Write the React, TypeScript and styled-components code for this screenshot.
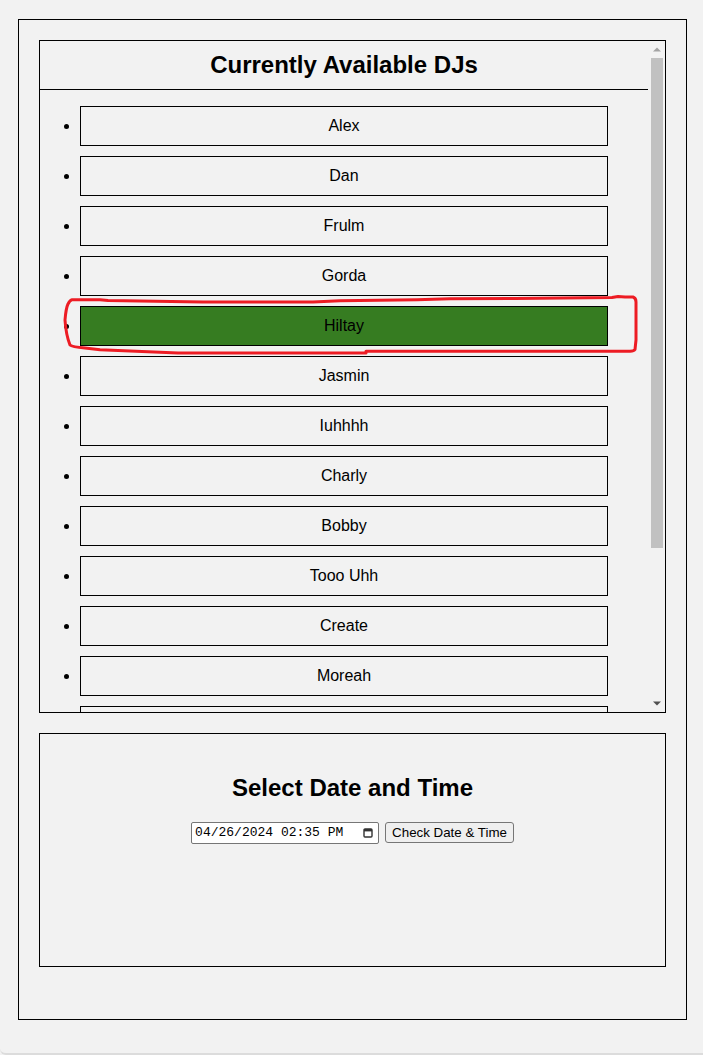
import React, { useState } from 'react';
import styled, { createGlobalStyle } from 'styled-components';

const djs = [
  'Alex',
  'Dan',
  'Frulm',
  'Gorda',
  'Hiltay',
  'Jasmin',
  'Iuhhhh',
  'Charly',
  'Bobby',
  'Tooo Uhh',
  'Create',
  'Moreah',
  'Zed',
  'Kiko',
  'Lumo',
  'Nova',
];

const GlobalStyle = createGlobalStyle`
  html, body {
    margin: 0;
    padding: 0;
    background: #f2f2f2;
  }
  body {
    font-family: "Liberation Sans", Arial, sans-serif;
    color: #000;
  }
`;

const Page = styled.div`
  position: relative;
  box-sizing: border-box;
  height: 1055px;
  padding: 19px 16px 0 18px;
  border-bottom: 2px solid #dcdcdc;
  border-bottom-left-radius: 6px;
  overflow: hidden;
`;

const Frame = styled.div`
  box-sizing: border-box;
  height: 1001px;
  border: 1px solid #000;
  padding: 20px;
  display: flex;
  flex-direction: column;
  gap: 20px;
`;

const DJPanel = styled.div`
  box-sizing: border-box;
  height: 673px;
  border: 1px solid #000;
  display: flex;
`;

const ScrollArea = styled.div`
  flex: 1;
  min-width: 0;
  overflow-y: auto;
  scrollbar-width: none;

  &::-webkit-scrollbar {
    display: none;
  }
`;

const Scrollbar = styled.div`
  width: 17px;
  flex-shrink: 0;
  display: flex;
  flex-direction: column;
`;

const ScrollArrow = styled.div`
  height: 17px;
  display: flex;
  align-items: center;
  justify-content: center;
`;

const ScrollTrack = styled.div`
  flex: 1;
`;

const ScrollThumb = styled.div`
  height: 490px;
  margin: 0 2px 0 3px;
  background: #c1c1c1;
`;

const PanelHeader = styled.div`
  border-bottom: 1px solid #000;

  h2 {
    margin: 10px 0;
    font-size: 24px;
    font-weight: bold;
    text-align: center;
  }
`;

const DJList = styled.ul`
  margin: 16px 0;
  padding: 0 40px;
  list-style: disc;

  li {
    margin-bottom: 10px;
    font-size: 16px;
  }
`;

const DJButton = styled.button<{ $selected: boolean }>`
  box-sizing: border-box;
  display: inline-block;
  width: 100%;
  height: 40px;
  margin: 0;
  border: 1px solid #000;
  border-radius: 0;
  background: ${(p) => (p.$selected ? '#367c21' : 'transparent')};
  color: #000;
  font-family: "Liberation Sans", Arial, sans-serif;
  font-size: 16px;
  cursor: pointer;
`;

const DatePanel = styled.div`
  box-sizing: border-box;
  height: 234px;
  border: 1px solid #000;
  padding: 20px;
  text-align: center;

  h2 {
    margin: 0.83em 0;
    font-size: 24px;
    font-weight: bold;
  }
`;

const DateRow = styled.div`
  display: flex;
  justify-content: center;
  align-items: center;
  gap: 6px;
`;

const DateField = styled.label`
  box-sizing: border-box;
  width: 188px;
  height: 22px;
  display: flex;
  align-items: center;
  padding: 0 5px 0 3px;
  border: 1px solid #767676;
  border-radius: 2px;
  background: #fff;

  input {
    flex: 1;
    min-width: 0;
    border: none;
    outline: none;
    padding: 0;
    background: transparent;
    font-family: "Liberation Mono", "DejaVu Sans Mono", monospace;
    font-size: 13px;
    color: #000;
  }
`;

const CheckButton = styled.button`
  box-sizing: border-box;
  height: 21px;
  font-family: "Liberation Sans", Arial, sans-serif;
  font-size: 13.33px;
  padding: 1px 6px;
  border: 1px solid #767676;
  border-radius: 3px;
  background: #efefef;
  color: #000;
`;

const Annotation = styled.svg`
  position: absolute;
  top: 0;
  left: 0;
  pointer-events: none;
`;

const App: React.FC = () => {
  const [selected, setSelected] = useState('Hiltay');
  const [when, setWhen] = useState('04/26/2024 02:35 PM');

  return (
    <Page>
      <GlobalStyle />
      <Frame>
        <DJPanel>
          <ScrollArea>
            <PanelHeader>
              <h2>Currently Available DJs</h2>
            </PanelHeader>
            <DJList>
              {djs.map((name) => (
                <li key={name}>
                  <DJButton $selected={name === selected} onClick={() => setSelected(name)}>
                    {name}
                  </DJButton>
                </li>
              ))}
            </DJList>
          </ScrollArea>
          <Scrollbar>
            <ScrollArrow>
              <svg width="8" height="5" viewBox="0 0 8 5">
                <polygon points="0,4.5 8,4.5 4,0.5" fill="#a3a3a3" />
              </svg>
            </ScrollArrow>
            <ScrollTrack>
              <ScrollThumb />
            </ScrollTrack>
            <ScrollArrow>
              <svg width="8" height="5" viewBox="0 0 8 5">
                <polygon points="0,0.5 8,0.5 4,4.5" fill="#505050" />
              </svg>
            </ScrollArrow>
          </Scrollbar>
        </DJPanel>
        <DatePanel>
          <h2>Select Date and Time</h2>
          <DateRow>
            <DateField>
              <input type="text" value={when} onChange={(e) => setWhen(e.target.value)} />
              <svg width="10" height="11" viewBox="0 0 10 11">
                <rect x="1" y="2" width="8" height="8" rx="1" fill="none" stroke="#333" strokeWidth="1.4" />
                <rect x="1" y="2" width="8" height="2.4" fill="#333" />
              </svg>
            </DateField>
            <CheckButton>Check Date &amp; Time</CheckButton>
          </DateRow>
        </DatePanel>
      </Frame>
      <Annotation width="703" height="1055" viewBox="0 0 703 1055">
        <path
          d="M72 299.7 L100 299.8 L108 300.5 L203 302 L313 302 L340 300.7 L417 299.7 L450 298.8 L515 298.5 L612 297.6 L618 296.5 L625 297 L633 297 Q636 298 636 302 L636 340 L635 349.5 Q634 351 630 351.3 L366 351.3 L366 353 L178 353 L100 349.7 L85 348 Q72 347 70 345 Q66 335 65 320 Q66 308 68 304 Q70 300 72 299.7 Z"
          fill="none"
          stroke="#ed1c24"
          strokeWidth="3"
          strokeLinejoin="round"
        />
      </Annotation>
    </Page>
  );
};

export default App;
